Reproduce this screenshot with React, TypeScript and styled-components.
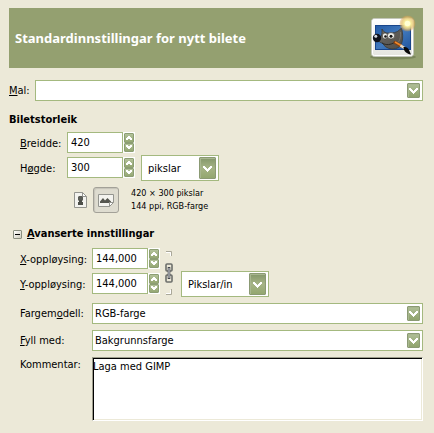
import React from "react";
import styled, { createGlobalStyle, css } from "styled-components";

const GlobalStyle = createGlobalStyle`
  *, *::before, *::after { box-sizing: border-box; }
  body {
    margin: 0;
    background: #ece9d8;
    color: #000;
    font-family: "DejaVu Sans Condensed", "DejaVu Sans", sans-serif;
    font-size: 11px;
    line-height: 15px;
  }
  input, select, textarea, button { font: inherit; color: inherit; margin: 0; border-radius: 0; }
`;

const green = "#a4b97f";

const Page = styled.main`
  padding: 8px 11px 12px 9px;
`;

const Header = styled.header`
  display: flex;
  align-items: center;
  justify-content: space-between;
  height: 60px;
  padding: 0 6px;
  background: #94a070;
  color: #fff;
`;

const Title = styled.h1`
  margin: 0;
  font-family: "Noto Sans", "DejaVu Sans Condensed", sans-serif;
  font-size: 13px;
  line-height: 18px;
  font-weight: bold;
`;

const TemplateRow = styled.div`
  display: flex;
  align-items: center;
  gap: 5px;
  margin-top: 12px;
`;

const Heading = styled.h2`
  margin: 0;
  font-size: 11px;
  line-height: 16px;
  font-weight: bold;
`;

const SizeHeading = styled(Heading)`
  margin: 11px 0 4px;
`;

const AdvancedHeading = styled(Heading)`
  display: flex;
  align-items: center;
  gap: 5px;
  margin: 13px 0 6px 4px;
`;

const Expander = styled.button`
  display: flex;
  align-items: center;
  justify-content: center;
  width: 9px;
  height: 9px;
  padding: 0;
  border: 1px solid #8a8f80;
  border-radius: 1px;
  background: linear-gradient(135deg, #fff, #cfcdbd);
`;

const Group = styled.div`
  padding-left: 11px;
`;

const FieldsRow = styled.div`
  display: flex;
  align-items: flex-end;
`;

const SizeRow = styled(FieldsRow)`
  gap: 6px;
`;

const Fields = styled.div<{ $label: number }>`
  display: grid;
  grid-template-columns: ${(p) => p.$label}px auto;
  grid-auto-rows: 21px;
  row-gap: 4px;
  align-items: center;
  padding-bottom: 3px;
  label { padding-top: 2px; }
`;

const Spin = styled.div`
  display: flex;
  height: 21px;
`;

const SpinInput = styled.input`
  width: 56px;
  padding: 0 3px;
  border: 1px solid ${green};
  background: #fff;
  outline: none;
`;

const SpinButtons = styled.div`
  display: flex;
  flex-direction: column;
  width: 12px;
  padding: 1px;
  background: #fff;
`;

const SpinButton = styled.button`
  display: flex;
  flex: 1;
  align-items: center;
  justify-content: center;
  min-height: 0;
  padding: 0;
  border: 1px solid #8c9e73;
  border-radius: 1px;
  background: linear-gradient(#b3c29a, #94a772);
`;

const Combo = styled.div<{ $large?: boolean }>`
  display: grid;
  flex: ${(p) => (p.$large ? "none" : "1")};
  min-width: 0;
  height: ${(p) => (p.$large ? 26 : 21)}px;
  border: 1px solid ${green};
  background: #fff;
  > * { grid-area: 1 / 1; }
`;

const Select = styled.select<{ $width?: number }>`
  appearance: none;
  width: ${(p) => (p.$width ? `${p.$width}px` : "100%")};
  min-width: 0;
  padding: 0 22px 0 ${(p) => (p.$width ? 6 : 2)}px;
  border: 0;
  background: transparent;
  outline: none;
`;

const ArrowBox = styled.span<{ $large?: boolean }>`
  display: flex;
  align-items: center;
  justify-content: center;
  justify-self: end;
  align-self: center;
  width: ${(p) => (p.$large ? 17 : 13)}px;
  height: ${(p) => (p.$large ? 22 : 15)}px;
  margin-right: 2px;
  border: 1px solid #8b9a74;
  border-radius: 1px;
  box-shadow: inset 1px 1px 0 #a8b78f;
  background: ${(p) => (p.$large ? "linear-gradient(#84976a, #a6b486 50%, #93a76f)" : "linear-gradient(#b0bf98, #8fa36c)")};
  pointer-events: none;
`;

const OrientationRow = styled.div`
  display: flex;
  align-items: center;
  margin: 6px 0 0 47px;
`;

const Toggle = styled.button<{ $on?: boolean }>`
  display: flex;
  align-items: center;
  justify-content: center;
  width: 26px;
  height: 26px;
  padding: 0;
  border: 1px solid transparent;
  border-radius: 3px;
  background: transparent;
  ${(p) =>
    p.$on &&
    css`
      border-color: #a3a198;
      background: #dedcd0;
      box-shadow: inset 1px 1px 1px #c6c4b8;
    `}
`;

const Summary = styled.p`
  margin: 0 0 0 12px;
  font-size: 9px;
  line-height: 13px;
`;

const Chain = styled.div`
  display: flex;
  flex-direction: column;
  align-items: center;
  justify-content: space-between;
  width: 9px;
  height: 44px;
  margin: 0 8px 2px 4px;
`;

const ChainButton = styled.button`
  display: flex;
  padding: 0;
  border: 0;
  background: none;
`;

const Details = styled.div`
  display: grid;
  grid-template-columns: 72px 1fr;
  row-gap: 6px;
  margin-top: 6px;
  align-items: center;
`;

const TopLabel = styled.label`
  align-self: start;
`;

const Comment = styled.textarea`
  display: block;
  width: 100%;
  height: 64px;
  padding: 1px 0;
  resize: none;
  outline: none;
  border: 1px solid;
  border-color: #9d9d8c #fff #fff #9d9d8c;
  background: #fff;
  box-shadow: inset 1px 1px 0 #000, inset -1px -1px 0 #ece9d8;
`;

function Chevron({ up, size = "m" }: { up?: boolean; size?: "s" | "m" }) {
  return size === "s" ? (
    <svg width="8" height="6" viewBox="0 0 8 6" shapeRendering="crispEdges" aria-hidden="true">
      <path d={up ? "M3 1h2v1h1v1h1v2H5V4H3v1H1V3h1V2h1z" : "M1 1h2v1h2V1h2v2H6v1H5v1H3V4H2V3H1z"} fill="#fff" />
    </svg>
  ) : (
    <svg width="9" height="7" viewBox="0 0 9 7" shapeRendering="crispEdges" aria-hidden="true">
      <path d="M0 1h2v1h1v1h1v1h1V3h1V2h1V1h2v2H8v1H7v1H6v1H5v1H4V6H3V5H2V4H1V3H0z" fill="#fff" />
    </svg>
  );
}

function SpinField({ id, value }: { id: string; value: string }) {
  return (
    <Spin>
      <SpinInput id={id} defaultValue={value} />
      <SpinButtons>
        <SpinButton type="button" aria-label="Auk"><Chevron up size="s" /></SpinButton>
        <SpinButton type="button" aria-label="Minsk"><Chevron size="s" /></SpinButton>
      </SpinButtons>
    </Spin>
  );
}

function ComboBox({ id, value, width, label }: { id: string; value: string; width?: number; label?: string }) {
  return (
    <Combo $large={!!width}>
      <Select id={id} $width={width} aria-label={label} defaultValue={value}>
        <option value={value}>{value}</option>
      </Select>
      <ArrowBox $large={!!width}><Chevron /></ArrowBox>
    </Combo>
  );
}

function WilberImage() {
  return (
    <svg width="48" height="48" viewBox="0 0 48 48" aria-hidden="true">
      <defs>
        <linearGradient id="sky" x1="0" y1="0" x2="1" y2="1">
          <stop offset="0" stopColor="#235ba5" />
          <stop offset=".5" stopColor="#4179bd" />
          <stop offset="1" stopColor="#20549d" />
        </linearGradient>
        <linearGradient id="frame" x1="0" y1="0" x2="0" y2="1">
          <stop offset="0" stopColor="#fff" />
          <stop offset="1" stopColor="#e4e4df" />
        </linearGradient>
        <linearGradient id="fur" x1="0" y1="0" x2="1" y2="1">
          <stop offset="0" stopColor="#6d6a64" />
          <stop offset="1" stopColor="#4f4d49" />
        </linearGradient>
        <radialGradient id="sun">
          <stop offset="0" stopColor="#ffffdf" />
          <stop offset=".4" stopColor="#f8ee9c" />
          <stop offset=".7" stopColor="#e8c97c" stopOpacity=".85" />
          <stop offset="1" stopColor="#df9b43" stopOpacity=".25" />
        </radialGradient>
      </defs>
      <ellipse cx="24" cy="43" rx="23" ry="2.500" fill="#5f6b45" opacity=".5" />
      <rect x="2.500" y="4.500" width="42" height="38" rx="3" fill="url(#frame)" stroke="#c3c6ba" />
      <rect x="3.500" y="5.500" width="40" height="36" rx="2" fill="none" stroke="#fff" />
      <rect x="6.500" y="11.500" width="35" height="24" fill="url(#sky)" stroke="#18458b" />
      <path d="M13 15c2 4 5 4.500 9 4 5 0 8-2 10.500-5 1.500 6 1.500 10 .5 14-1 5-5 7-10 7-5-.5-8-3-9.500-6-3 0-5-3-3.500-5 3-1 3-4 3-9z" fill="url(#fur)" stroke="#3a3835" strokeWidth=".8" />
      <path d="M31.500 18c0 4 0 7-2 10" stroke="#77736b" fill="none" />
      <ellipse cx="16" cy="22" rx="2.600" ry="3" fill="#f1f1ed" stroke="#33312d" strokeWidth=".6" />
      <ellipse cx="22" cy="21.800" rx="3.600" ry="3.200" fill="#f3f3ef" stroke="#33312d" strokeWidth=".6" />
      <circle cx="16.500" cy="22.500" r="1.300" fill="#111" />
      <circle cx="22" cy="22.300" r="1.500" fill="#111" />
      <circle cx="8" cy="24" r="4.200" fill="#10131c" />
      <circle cx="6.800" cy="22.200" r="1.500" fill="#d5dbe4" />
      <path d="M13 29c4 2.500 9 2 13-1" stroke="#2a2825" fill="none" />
      <path d="M26 28.500l7 4" stroke="#8a3f0c" strokeWidth="3" strokeLinecap="round" />
      <path d="M26 28l7 4" stroke="#ef8a2c" strokeWidth="1.600" />
      <path d="M31.500 31.500l4 2.500" stroke="#e6dccb" strokeWidth="2.600" />
      <path d="M34.500 33c3-.5 5 1 5.500 3l2 4.500c-4-.5-7.500-3-7.500-7.500z" fill="#0a0a0a" />
      <circle cx="38.500" cy="9.500" r="8" fill="url(#sun)" />
      <circle cx="38.500" cy="9.500" r="2.800" fill="#ffffd4" />
    </svg>
  );
}

function PortraitIcon() {
  return (
    <svg width="13" height="16" viewBox="0 0 13 16" aria-hidden="true">
      <path d="M.5.5h8l4 4v11H.5z" fill="#f3f3ef" stroke="#94958f" />
      <path d="M8.500.5v4h4z" fill="#fff" stroke="#94958f" />
      <path d="M5 4h3l1 1v3L8 9H5L4 8V5z" fill="#5a5c56" />
      <path d="M5 8h3v2h1v3H4v-3h1z" fill="#4d4f49" />
    </svg>
  );
}

function LandscapeIcon() {
  return (
    <svg width="16" height="13" viewBox="0 0 16 13" aria-hidden="true">
      <path d="M.5.5h15v8l-4 4H.5z" fill="#f3f3ef" stroke="#94958f" />
      <path d="M2 9V7.500L5 4l2 2.500L9.500 4 13 7.500V9z" fill="#55564f" />
      <path d="M15.500 8.500h-4v4z" fill="#fff" stroke="#94958f" />
    </svg>
  );
}

function ChainIcon() {
  return (
    <svg width="8" height="20" viewBox="0 0 8 20" fill="none" aria-hidden="true">
      <rect x="1" y="1" width="6" height="7" rx="1" stroke="#6c6f6b" strokeWidth="1.600" />
      <rect x="1" y="12" width="6" height="7" rx="1" stroke="#6c6f6b" strokeWidth="1.600" />
      <path d="M4 4v12" stroke="#42454a" strokeWidth="2.600" />
      <path d="M4 5v10" stroke="#dfe3e8" />
    </svg>
  );
}

function Bracket({ bottom }: { bottom?: boolean }) {
  return (
    <svg width="7" height="6" viewBox="0 0 7 6" fill="none" aria-hidden="true">
      <path d={bottom ? "M1 5.500h5.500V0" : "M1 .5h5.500V5"} stroke={bottom ? "#aaa899" : "#aaa899"} />
      <path d={bottom ? "M1 4.500h4.500V1" : "M1 1.500h4.500V5"} stroke="#fff" />
    </svg>
  );
}

export default function App() {
  return (
    <>
      <GlobalStyle />
      <Page>
        <Header>
          <Title>Standardinnstillingar for nytt bilete</Title>
          <WilberImage />
        </Header>

        <TemplateRow>
          <label htmlFor="template"><u>M</u>al:</label>
          <ComboBox id="template" value="" />
        </TemplateRow>

        <SizeHeading>Biletstorleik</SizeHeading>
        <Group>
          <SizeRow>
            <Fields $label={47}>
              <label htmlFor="width"><u>B</u>reidde:</label>
              <SpinField id="width" value="420" />
              <label htmlFor="height">H<u>ø</u>gde:</label>
              <SpinField id="height" value="300" />
            </Fields>
            <ComboBox id="unit" value="pikslar" width={76} label="Eining" />
          </SizeRow>
          <OrientationRow>
            <Toggle type="button" aria-label="Ståande"><PortraitIcon /></Toggle>
            <Toggle type="button" aria-label="Liggjande" aria-pressed="true" $on><LandscapeIcon /></Toggle>
            <Summary>420 × 300 pikslar<br />144 ppi, RGB-farge</Summary>
          </OrientationRow>
        </Group>

        <AdvancedHeading>
          <Expander type="button" aria-label="Avanserte innstillingar" aria-expanded="true">
            <svg width="5" height="1" aria-hidden="true"><rect width="5" height="1" fill="#000" /></svg>
          </Expander>
          <span><u>A</u>vanserte innstillingar</span>
        </AdvancedHeading>
        <Group>
          <FieldsRow>
            <Fields $label={72}>
              <label htmlFor="xres"><u>X</u>-oppløysing:</label>
              <SpinField id="xres" value="144,000" />
              <label htmlFor="yres"><u>Y</u>-oppløysing:</label>
              <SpinField id="yres" value="144,000" />
            </Fields>
            <Chain>
              <Bracket />
              <ChainButton type="button" aria-label="Lenkje"><ChainIcon /></ChainButton>
              <Bracket bottom />
            </Chain>
            <ComboBox id="resunit" value="Pikslar/in" width={86} label="Oppløysingseining" />
          </FieldsRow>
          <Details>
            <label htmlFor="mode">Fargem<u>o</u>dell:</label>
            <ComboBox id="mode" value="RGB-farge" />
            <label htmlFor="fill"><u>F</u>yll med:</label>
            <ComboBox id="fill" value="Bakgrunnsfarge" />
            <TopLabel htmlFor="comment">Kommentar:</TopLabel>
            <Comment id="comment" defaultValue="Laga med GIMP" />
          </Details>
        </Group>
      </Page>
    </>
  );
}
